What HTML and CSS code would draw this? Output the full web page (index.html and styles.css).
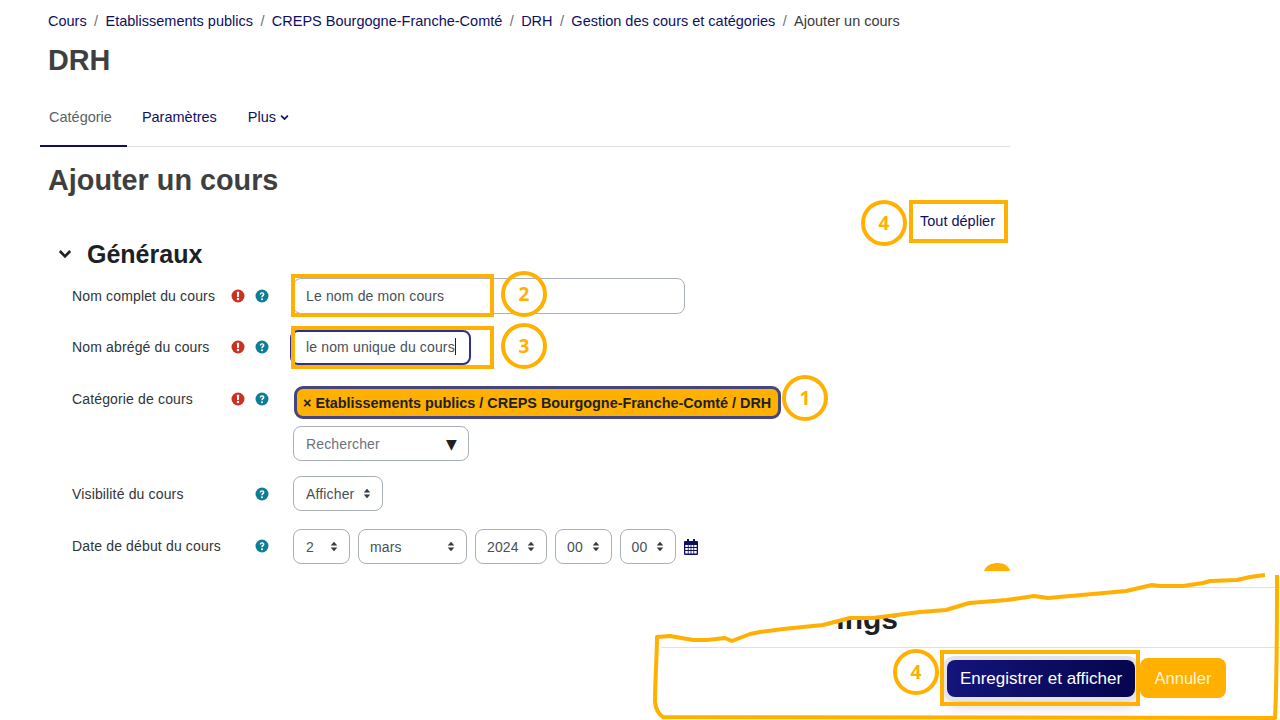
FILE: index.html
```html
<!DOCTYPE html>
<html lang="fr">
<head>
    <meta charset="UTF-8">
    <meta name="viewport" content="width=device-width, initial-scale=1.0">
    <title>Ajouter un cours</title>
    <link rel="stylesheet" href="styles.css">
</head>
<body>
  <svg class="defs" width="0" height="0">
    <symbol id="icon-required" viewBox="0 0 14 14">
      <circle cx="7" cy="7" r="6.5" fill="#ca3120"/>
      <path d="M5.800 2.800h2.400l-.3 5.200H6.100z" fill="#fff"/>
      <circle cx="7" cy="10.100" r="1.250" fill="#fff"/>
    </symbol>
    <symbol id="icon-help" viewBox="0 0 14 14">
      <circle cx="7" cy="7" r="6.5" fill="#0f7e95"/>
      <path d="M4.700 5.400C4.800 4 5.800 3.200 7.100 3.200c1.300 0 2.300.8 2.300 2 0 1.800-1.700 1.700-1.700 3H6.300c0-2.200 1.600-2 1.600-3 0-.5-.4-.8-.9-.8-.6 0-.9.4-1 1z" fill="#fff"/>
      <circle cx="7" cy="10.300" r="1" fill="#fff"/>
    </symbol>
    <symbol id="icon-sort" viewBox="0 0 8 12">
      <path d="M4 .8 7.600 4.800H.4zM4 11.200.4 7.200h7.200z" fill="#343a40"/>
    </symbol>
    <symbol id="icon-chevron" viewBox="0 0 14 10">
      <path d="M1.800 2 7 7.400 12.200 2" fill="none" stroke="currentColor" stroke-width="2.600"/>
    </symbol>
    <symbol id="icon-calendar" viewBox="0 0 14 16">
      <path d="M3 0h2v2h4V0h2v2h2a1 1 0 0 1 1 1v12a1 1 0 0 1-1 1H1a1 1 0 0 1-1-1V3a1 1 0 0 1 1-1h2z" fill="#0f0f5f"/>
      <path d="M1.300 6h2.500v2H1.300zM4.600 6h2v2h-2zM7.400 6h2v2h-2zM10.200 6h2.500v2h-2.500zM1.300 9h2.500v2H1.300zM4.600 9h2v2h-2zM7.400 9h2v2h-2zM10.200 9h2.500v2h-2.500zM1.300 12h2.500v2.500H1.300zM4.600 12h2v2.500h-2zM7.400 12h2v2.500h-2zM10.200 12h2.500v2.500h-2.500z" fill="#fff"/>
    </symbol>
  </svg>

  <div class="page">
    <ol class="breadcrumb">
      <li><a>Cours</a></li>
      <li><a>Etablissements publics</a></li>
      <li><a>CREPS Bourgogne-Franche-Comté</a></li>
      <li><a>DRH</a></li>
      <li><a>Gestion des cours et catégories</a></li>
      <li>Ajouter un cours</li>
    </ol>
    <h1 class="page-title">DRH</h1>

    <nav class="tabs">
      <a class="tab active">Catégorie</a>
      <a class="tab">Paramètres</a>
      <a class="tab tab-more">Plus <svg class="tab-chevron"><use href="#icon-chevron"/></svg></a>
    </nav>

    <h2 class="page-title section-title">Ajouter un cours</h2>

    <div class="expand-row"><a>Tout déplier</a></div>

    <h3 class="fieldset-title">
      <svg class="fieldset-chevron"><use href="#icon-chevron"/></svg>
      Généraux
    </h3>

    <form class="course-form">
      <div class="form-row row-name">
        <div class="form-label">
          <span>Nom complet du cours</span>
          <svg class="icon icon-req"><use href="#icon-required"/></svg>
          <svg class="icon"><use href="#icon-help"/></svg>
        </div>
        <div class="field field-long">Le nom de mon cours</div>
      </div>

      <div class="form-row row-short">
        <div class="form-label">
          <span>Nom abrégé du cours</span>
          <svg class="icon icon-req"><use href="#icon-required"/></svg>
          <svg class="icon"><use href="#icon-help"/></svg>
        </div>
        <div class="field field-focus">le nom unique du cours<span class="text-caret"></span></div>
      </div>

      <div class="form-row row-category">
        <div class="form-label">
          <span>Catégorie de cours</span>
          <svg class="icon icon-req"><use href="#icon-required"/></svg>
          <svg class="icon"><use href="#icon-help"/></svg>
        </div>
        <div class="category-field">
          <div class="chip">× Etablissements publics / CREPS Bourgogne-Franche-Comté / DRH</div>
          <div class="field field-search"><span class="placeholder">Rechercher</span><span class="search-arrow">▼</span></div>
        </div>
      </div>

      <div class="form-row row-visibility">
        <div class="form-label">
          <span>Visibilité du cours</span>
          <svg class="icon icon-alone"><use href="#icon-help"/></svg>
        </div>
        <div class="select select-show">Afficher<svg class="sort"><use href="#icon-sort"/></svg></div>
      </div>

      <div class="form-row row-date">
        <div class="form-label">
          <span>Date de début du cours</span>
          <svg class="icon icon-alone"><use href="#icon-help"/></svg>
        </div>
        <div class="date-fields">
          <div class="select select-day">2<svg class="sort"><use href="#icon-sort"/></svg></div>
          <div class="select select-month">mars<svg class="sort"><use href="#icon-sort"/></svg></div>
          <div class="select select-year">2024<svg class="sort"><use href="#icon-sort"/></svg></div>
          <div class="select select-time">00<svg class="sort"><use href="#icon-sort"/></svg></div>
          <div class="select select-time">00<svg class="sort"><use href="#icon-sort"/></svg></div>
          <svg class="calendar"><use href="#icon-calendar"/></svg>
        </div>
      </div>
    </form>
  </div>

  <!-- morceau de capture colle en bas a droite -->
  <div class="snippet">
    <h2 class="snippet-title">Settings</h2>
    <div class="snippet-actions">
      <a class="btn btn-primary">Enregistrer et afficher</a>
      <a class="btn btn-cancel">Annuler</a>
    </div>
  </div>

  <!-- annotations dessinees par-dessus la capture -->
  <svg class="annotations" viewBox="0 0 1280 720">
    <path class="tear" d="M650 574H1280V575L1265 575 1250 577 1237 580 1210 581 1203 583 1183 586 1160 586 1152 585 1126 591 1048 598 1034 596 1007 600 969 603 946 610 920 612 873 618 850 618 837 622 835 633 760 634 750 634 732 641 725 638 707 640 693 640 670 636 657 637H650z"/>
    <path class="scribble" d="M1265 575 1250 577 1237 580 1210 581 1203 583 1183 586 1160 586 1152 585 1126 591 1048 598 1034 596 1007 600 969 603 946 610 920 612 873 618 850 618 823 625 783 629 760 632 750 634 732 641 725 638 707 640 693 640 670 636 657 637C657 655 655 680 655 702 656 710 658 714 663 717L1275 718C1277 680 1277 620 1277 575"/>
    <path class="dome" d="M984 571C986 565 992 563 998 563 1004 563 1009 566 1010 571z"/>

    <rect class="box" x="293" y="276" width="199" height="39"/>
    <rect class="box" x="293" y="328" width="199" height="39"/>
    <rect class="box" x="911" y="202" width="95" height="39"/>
    <rect class="box" x="942" y="652" width="196" height="52"/>

    <circle class="ring" cx="524" cy="294" r="21"/>
    <circle class="ring" cx="524" cy="346" r="21"/>
    <circle class="ring" cx="805" cy="398" r="21"/>
    <circle class="ring" cx="884" cy="223" r="21"/>
    <ellipse class="ring" cx="916" cy="672" rx="21" ry="21"/>

    <text class="digit" x="524" y="301">2</text>
    <text class="digit" x="524" y="353">3</text>
    <text class="digit" x="805" y="405">1</text>
    <text class="digit" x="884" y="230">4</text>
    <text class="digit" x="916" y="679">4</text>
  </svg>
</body>
</html>
```

FILE: styles.css
```css
body {
    font-family: "Liberation Sans", Arial, sans-serif;
    font-size: 14.5px;
    background-color: white;
    margin: 0;
    padding: 0;
    color: #1d2125;
    position: relative;
    width: 1280px;
    height: 720px;
    overflow: hidden;
}
.defs {
    position: absolute;
}
.page {
    height: 564px;
}
.breadcrumb {
    display: flex;
    list-style: none;
    margin: 0;
    padding: 12px 0 0 48px;
    line-height: 18px;
    color: #3a3a3a;
}
.breadcrumb a {
    color: #0f0f5f;
}
.breadcrumb li + li::before {
    content: "/";
    color: #6a737b;
    padding: 0 7.400px;
}
.page-title {
    font-size: 28.800px;
    line-height: 34px;
    font-weight: bold;
    color: #3f3f3f;
    margin: 13px 0 0 48px;
}
.tabs {
    display: flex;
    width: 970px;
    margin: 20px 0 0 40px;
    border-bottom: 1px solid #dee2e6;
    line-height: 21px;
}
.tab {
    padding: 10px 15px 19px;
    margin-bottom: -1px;
    color: #0f0f5f;
    display: flex;
    align-items: center;
    gap: 4px;
}
.tab.active {
    padding-left: 9px;
    color: #5a5f64;
    border-bottom: 2px solid #0f0f5f;
    padding-bottom: 17px;
}
.tab-more {
    margin-left: 1px;
}
.tab-chevron {
    width: 9px;
    height: 7px;
}
.section-title {
    margin-top: 16px;
}
.expand-row {
    width: 995px;
    margin-top: 14px;
    line-height: 20px;
    text-align: right;
    color: #0f0f5f;
}
.fieldset-title {
    display: flex;
    align-items: center;
    margin: 8px 0 0 58px;
    font-size: 25px;
    line-height: 30px;
    font-weight: bold;
    color: #1d2125;
}
.fieldset-chevron {
    width: 14px;
    height: 10px;
    margin-right: 15px;
}
.course-form {
    margin: 9px 0 0 72px;
    font-size: 14px;
    letter-spacing: 0.15px;
}
.form-row {
    display: flex;
    align-items: flex-start;
}
.form-label {
    width: 221px;
    flex: none;
    display: flex;
    align-items: center;
    height: 36px;
    color: #2f3438;
}
.form-label span {
    width: 159px;
    flex: none;
}
.icon {
    width: 14px;
    height: 14px;
    flex: none;
    margin-left: 10px;
}
.icon-req {
    margin-left: 0;
}
.icon-alone {
    margin-left: 24px;
}
.row-short {
    margin-top: 15px;
}
.row-category {
    margin-top: 17px;
}
.row-category .form-label {
    height: 32px;
    margin-top: 1px;
}
.row-visibility {
    margin-top: 15px;
}
.row-date {
    margin-top: 17px;
}
.row-date .form-label {
    height: 34px;
}
.field {
    box-sizing: border-box;
    height: 36px;
    border: 1px solid #a9afb6;
    border-radius: 8px;
    padding-left: 12px;
    line-height: 34px;
    color: #495057;
    background: white;
}
.field-long {
    width: 392px;
}
.field-focus {
    width: 181px;
    height: 35px;
    margin-top: 1px;
    margin-left: -3px;
    border: 2px solid #2f2f8f;
    padding-left: 14px;
    line-height: 31px;
    white-space: nowrap;
}
.text-caret {
    display: inline-block;
    width: 1px;
    height: 17px;
    background: #1d2125;
    vertical-align: -3px;
}
.category-field {
    display: flex;
    flex-direction: column;
    align-items: flex-start;
    gap: 7px;
}
.chip {
    box-sizing: border-box;
    height: 33px;
    width: 487px;
    margin-top: 4px;
    margin-left: 1px;
    border: 3px solid #45457f;
    border-radius: 9px;
    background: #ffb000;
    padding-left: 6px;
    font-size: 14.400px;
    letter-spacing: 0;
    font-weight: bold;
    line-height: 28px;
    color: #1d2125;
    white-space: nowrap;
}
.field-search {
    width: 176px;
    height: 35px;
    display: flex;
    justify-content: space-between;
    align-items: center;
    padding-right: 11px;
}
.placeholder {
    color: #6a737b;
}
.search-arrow {
    color: #1d2125;
    font-size: 14px;
    font-family: "DejaVu Sans", sans-serif;
}
.select {
    box-sizing: border-box;
    height: 35px;
    border: 1px solid #a9afb6;
    border-radius: 8px;
    padding: 0 11px 0 12px;
    display: flex;
    align-items: center;
    justify-content: space-between;
    color: #495057;
    flex: none;
}
.sort {
    width: 8px;
    height: 11px;
    flex: none;
}
.select-show {
    width: 90px;
}
.date-fields {
    display: flex;
    align-items: center;
    gap: 8px;
}
.select-day {
    width: 57px;
}
.select-month {
    width: 109px;
    padding-left: 11px;
}
.select-year {
    width: 72px;
    padding-left: 11px;
}
.select-time {
    width: 56.500px;
    padding-left: 11px;
}
.calendar {
    width: 14px;
    height: 16px;
}
.snippet {
    height: 155px;
    margin-left: 655px;
    position: relative;
    box-sizing: border-box;
    padding-top: 23px;
    background: linear-gradient(#dee2e6, #dee2e6) no-repeat 6px 83px / 100% 1px;
}
.snippet::before {
    content: "";
    display: block;
    height: 1px;
    background: #dee2e6;
}
.snippet-title {
    margin: 14px 0 0;
    width: 243px;
    font-size: 30px;
    line-height: 34px;
    text-align: right;
    font-weight: bold;
    color: #1d2125;
}
.snippet-actions {
    display: flex;
    align-items: center;
    gap: 5px;
    margin: 22px 0 0 292px;
}
.btn {
    box-sizing: border-box;
    border-radius: 8px;
    text-align: center;
    color: white;
}
.btn-primary {
    width: 188px;
    height: 37px;
    line-height: 37px;
    font-size: 17px;
    background: linear-gradient(90deg, #14147a, #05054f);
    box-shadow: 0 0 0 4px #e4e4e6, 0 8px 14px rgba(0,0,0,0.2);
}
.btn-cancel {
    width: 86px;
    height: 40px;
    line-height: 40px;
    font-size: 16.500px;
    background: #ffb000;
    color: #fff4d8;
}
.annotations {
    position: absolute;
    left: 0;
    top: 0;
    width: 1280px;
    height: 720px;
    pointer-events: none;
}
.tear {
    fill: white;
}
.scribble {
    fill: none;
    stroke: #ffb000;
    stroke-width: 4;
    stroke-linejoin: round;
}
.dome {
    fill: #ffb000;
}
.box {
    fill: none;
    stroke: #ffb000;
    stroke-width: 4;
}
.ring {
    fill: none;
    stroke: #ffb000;
    stroke-width: 4;
}
.digit {
    font-family: "Open Sans", sans-serif;
    font-size: 19px;
    font-weight: bold;
    fill: #ffb000;
    text-anchor: middle;
}
```
